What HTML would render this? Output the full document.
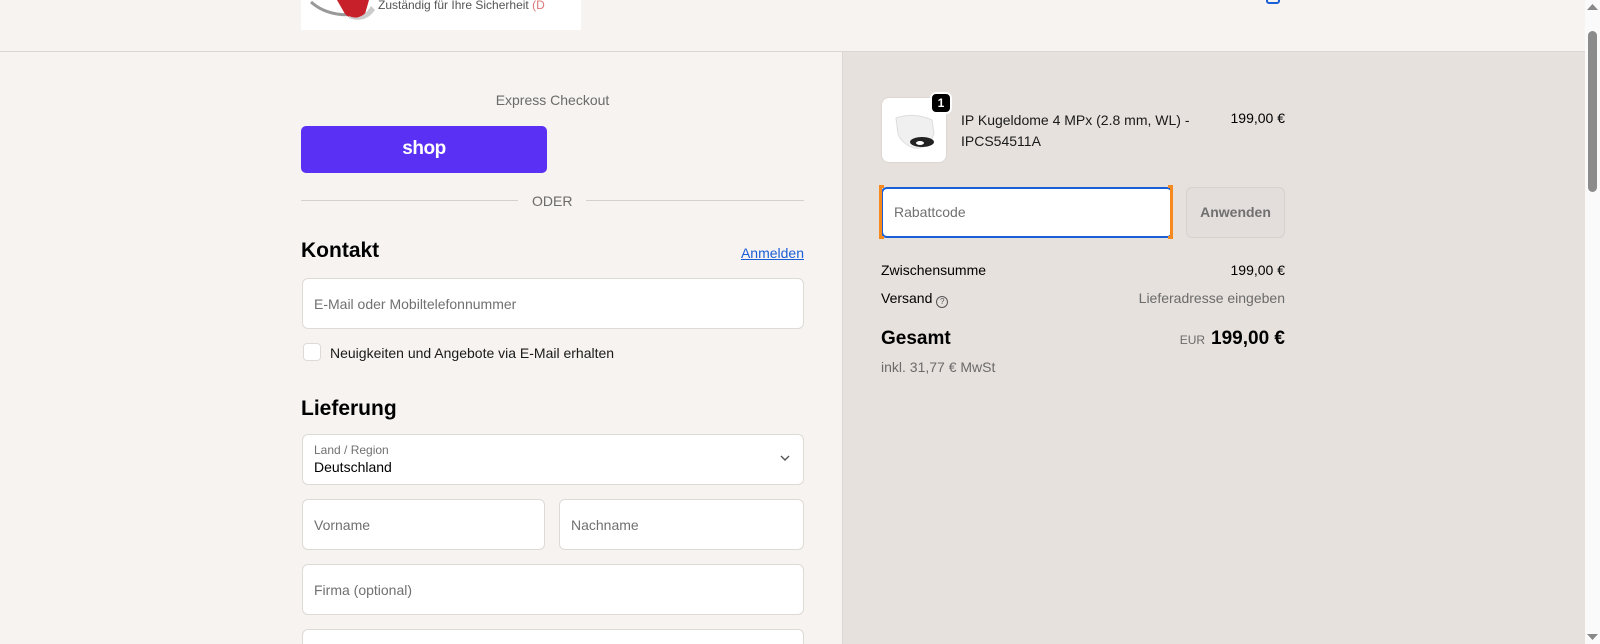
<!DOCTYPE html>
<html style="width:1600px;height:644px;overflow:hidden"><head><meta charset="utf-8"><style>
*{box-sizing:border-box;margin:0;padding:0}
body{width:1600px;height:644px;overflow:hidden;background:#f6f3f0;font-family:"Liberation Sans",Arial,sans-serif;color:#000;position:relative;font-size:14px}
.a{position:absolute}
.hdr{left:0;top:0;width:1585px;height:52px;background:#f6f3f0;border-bottom:1px solid #dcd7d2}
.right{left:842px;top:52px;width:743px;height:592px;background:#e6e1dd;border-left:1px solid #dcd7d2}
.inp{position:absolute;background:#fff;border:1px solid #dedad6;border-radius:6px;height:51px;color:#707070;padding-left:11px;line-height:50px}
.h{font-size:21px;font-weight:bold}
.sb{left:1585px;top:0;width:15px;height:644px;background:#fafafa}
</style></head><body>
<div class="a hdr"></div>
<div class="a" style="left:301px;top:0;width:280px;height:30px;background:#fff;overflow:hidden">
 <svg class="a" style="left:8px;top:0" width="70" height="22"><path d="M2 2 Q20 18 50 14" stroke="#999" stroke-width="3" fill="none"/><path d="M28 0 L60 0 L56 14 Q44 22 36 14Z" fill="#c7202a"/><path d="M40 16 Q52 22 62 6 L66 10 Q56 24 40 18Z" fill="#ccc"/></svg>
 <div class="a" style="left:77px;top:-2px;font-size:12px;color:#555;white-space:nowrap">Zuständig für Ihre Sicherheit <span style="color:#d77">(D</span></div>
</div>
<div class="a" style="left:1266px;top:-6px;width:14px;height:10px;border:2px solid #1a5fd6;border-radius:3px"></div>
<div class="a right"></div>
<div class="a" style="left:301px;width:503px;top:92px;text-align:center;color:#6b6b6b">Express Checkout</div>
<div class="a" style="left:301px;top:126px;width:246px;height:47px;background:#5a31f4;border-radius:5px;color:#fff;font-weight:bold;font-size:19px;text-align:center;line-height:46px;letter-spacing:-0.5px">shop</div>
<div class="a" style="left:301px;top:200px;width:217px;height:1px;background:#d6d1cc"></div>
<div class="a" style="left:586px;top:200px;width:218px;height:1px;background:#d6d1cc"></div>
<div class="a" style="left:532px;top:193px;color:#6b6b6b">ODER</div>
<div class="a h" style="left:301px;top:239px">Kontakt</div>
<div class="a" style="left:740px;top:245px;color:#1a5fd6;text-decoration:underline;width:64px;text-align:right">Anmelden</div>
<div class="inp" style="left:302px;top:278px;width:502px">E-Mail oder Mobiltelefonnummer</div>
<div class="a" style="left:303px;top:343px;width:18px;height:18px;background:#fff;border:1px solid #dedad6;border-radius:4px"></div>
<div class="a" style="left:330px;top:345px;color:#1a1a1a">Neuigkeiten und Angebote via E-Mail erhalten</div>
<div class="a h" style="left:301px;top:397px">Lieferung</div>
<div class="inp" style="left:302px;top:434px;width:502px;line-height:normal">
 <div style="font-size:12px;margin-top:8px">Land / Region</div>
 <div style="color:#000;margin-top:2px">Deutschland</div>
 <svg class="a" style="left:477px;top:20px" width="10" height="7"><path d="M1 1 L5 5 L9 1" stroke="#555" stroke-width="1.4" fill="none"/></svg>
</div>
<div class="inp" style="left:302px;top:499px;width:243px">Vorname</div>
<div class="inp" style="left:559px;top:499px;width:245px">Nachname</div>
<div class="inp" style="left:302px;top:564px;width:502px">Firma (optional)</div>
<div class="inp" style="left:302px;top:629px;width:502px;height:15px;border-bottom:none;border-radius:6px 6px 0 0"></div>
<div class="a" style="left:881px;top:97px;width:66px;height:66px;background:#fff;border:1px solid #dcd7d2;border-radius:8px">
 <svg class="a" style="left:10px;top:14px" width="46" height="40"><path d="M4 6 Q22 0 40 8 L42 22 Q36 38 22 36 Q10 32 6 22Z" fill="#f0f0f0" stroke="#ddd"/><ellipse cx="30" cy="30" rx="12" ry="5" fill="#222"/><ellipse cx="28" cy="31" rx="4" ry="2" fill="#fff"/></svg>
</div>
<div class="a" style="left:930px;top:92px;width:22px;height:22px;background:#000;color:#fff;border:2px solid #fff;border-radius:6px;font-size:12px;font-weight:bold;text-align:center;line-height:18px">1</div>
<div class="a" style="left:961px;top:110px;line-height:21px;color:#1a1a1a">IP Kugeldome 4 MPx (2.8 mm, WL) -<br>IPCS54511A</div>
<div class="a" style="left:1185px;top:110px;width:100px;text-align:right">199,00 €</div>
<div class="inp" style="left:881px;top:187px;width:292px;border:2px solid #1a5fd6;line-height:47px;padding-left:11px">Rabattcode</div>
<div class="a" style="left:879px;top:185px;width:5px;height:54px;border-top:3px solid #f68a1e;border-bottom:3px solid #f68a1e;border-left:3px solid #f68a1e"></div>
<div class="a" style="left:1168px;top:185px;width:5px;height:54px;border-top:3px solid #f68a1e;border-bottom:3px solid #f68a1e;border-right:3px solid #f68a1e"></div>
<div class="a" style="left:1186px;top:187px;width:99px;height:51px;background:#e3dedb;border:1px solid #d6d1cc;border-radius:6px;color:#707070;font-weight:bold;text-align:center;line-height:49px">Anwenden</div>
<div class="a" style="left:881px;top:262px">Zwischensumme</div>
<div class="a" style="left:1185px;top:262px;width:100px;text-align:right">199,00 €</div>
<div class="a" style="left:881px;top:290px">Versand <span style="display:inline-block;width:12px;height:12px;border:1.3px solid #555;border-radius:50%;font-size:8px;text-align:center;line-height:10px;vertical-align:-1px;color:#555">?</span></div>
<div class="a" style="left:1085px;top:290px;width:200px;text-align:right;color:#6b6b6b">Lieferadresse eingeben</div>
<div class="a" style="left:881px;top:328px;font-size:19px;font-weight:bold">Gesamt</div>
<div class="a" style="left:1085px;top:328px;width:200px;text-align:right;font-size:19px;font-weight:bold"><span style="font-size:12px;font-weight:normal;color:#6b6b6b;margin-right:6px">EUR</span>199,00 €</div>
<div class="a" style="left:881px;top:359px;color:#6b6b6b">inkl. 31,77 € MwSt</div>
<div class="a sb"></div>
<svg class="a" style="left:1587px;top:4px" width="11" height="6"><path d="M0 6 L5.5 0 L11 6Z" fill="#888"/></svg>
<div class="a" style="left:1588px;top:31px;width:9px;height:161px;background:#8b8b8b;border-radius:5px"></div>
<svg class="a" style="left:1587px;top:634px" width="11" height="6"><path d="M0 0 L5.5 6 L11 0Z" fill="#888"/></svg>
</body></html>
